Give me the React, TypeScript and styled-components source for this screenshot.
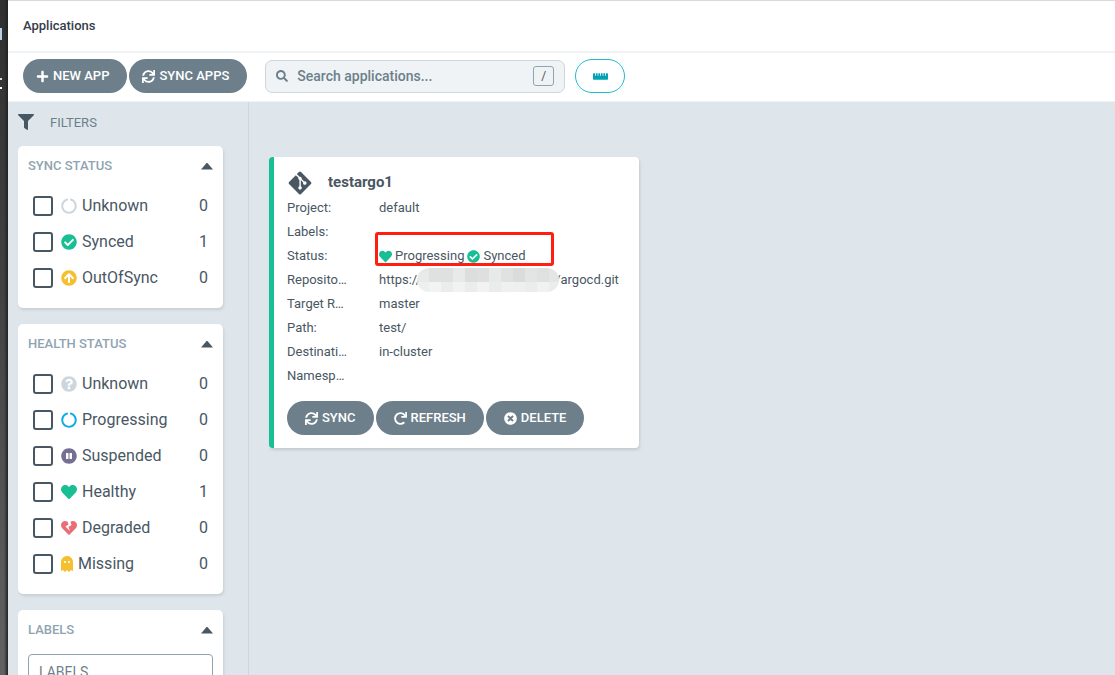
import React from 'react';
import styled, { createGlobalStyle } from 'styled-components';
import {
  FaArrowCircleUp, FaCheckCircle, FaCircleNotch, FaFilter, FaGhost, FaGitAlt, FaHeart, FaHeartBroken,
  FaPauseCircle, FaPlus, FaQuestionCircle, FaRedo, FaRulerHorizontal, FaSearch, FaSync, FaTimesCircle,
} from 'react-icons/fa';

const Global = createGlobalStyle`
  *, *::before, *::after { box-sizing: border-box; }
  html, body, #root { height: 100%; }
  body {
    margin: 0;
    font-family: Roboto, "Liberation Sans", sans-serif;
    font-size: 13px;
    color: #495763;
    background: #dee6eb;
    overflow: hidden;
  }
  button, input { font-family: inherit; }
`;

const Shell = styled.div`
  display: flex;
  height: 100vh;
  overflow: hidden;
`;

const WindowEdge = styled.aside`
  flex: 0 0 8px;
  display: flex;
  flex-direction: column;
  background: linear-gradient(to right, transparent 4px, #222 8px), linear-gradient(#303030, #404040 40%, #626262);
`;

const EdgeMark = styled.i<{ $top: number; $height: number; $width: number; $color: string }>`
  margin-top: ${p => p.$top}px;
  height: ${p => p.$height}px;
  width: ${p => p.$width}px;
  background: ${p => p.$color};
`;

const Page = styled.div`
  flex: 1;
  min-width: 0;
  display: flex;
  flex-direction: column;
  border-top: 1px solid #d8dadb;
`;

const TitleBar = styled.header`
  flex: none;
  height: 52px;
  padding: 0 15px;
  display: flex;
  align-items: center;
  background: #fff;
  border-bottom: 2px solid #eff3f5;
`;

const Title = styled.h1`
  margin: 0;
  font-size: 13px;
  line-height: 20px;
  font-weight: 500;
  color: #363c4a;
`;

const Toolbar = styled.div`
  flex: none;
  height: 49px;
  padding: 0 15px 2px;
  display: flex;
  align-items: center;
  background: #fff;
  border-bottom: 1px solid #eff3f5;
`;

const Buttons = styled.div`
  display: flex;
  gap: 2px;
`;

const Button = styled.button<{ $start: number }>`
  height: 34px;
  padding: 0 18px 0 ${p => p.$start}px;
  display: flex;
  align-items: center;
  gap: 4px;
  border: 0;
  border-radius: 17px;
  background: #6d7f8b;
  color: #fff;
  font-size: 13px;
  line-height: 20px;
  font-weight: 500;
  text-transform: uppercase;
  white-space: nowrap;
  svg { width: 13px; height: 13px; }
`;

const SearchBox = styled.label`
  width: 300px;
  height: 33px;
  margin: 0 10px 0 18px;
  padding: 0 10px;
  display: flex;
  align-items: center;
  gap: 9px;
  border: 1px solid #ccd6dd;
  border-radius: 7px;
  background: #eff3f5;
  color: #6d7f8b;
  svg { flex: none; width: 12px; height: 12px; }
`;

const SearchInput = styled.input`
  flex: 1;
  min-width: 0;
  padding: 0;
  border: 0;
  outline: 0;
  background: transparent;
  font-size: 14px;
  line-height: 20px;
  font-weight: 500;
  &::placeholder { color: #6d7f8b; opacity: 1; }
`;

const Key = styled.kbd`
  width: 21px;
  height: 20px;
  border: 1px solid #8fa4b1;
  border-radius: 3px;
  font-family: inherit;
  font-size: 12px;
  line-height: 18px;
  text-align: center;
  color: #495763;
`;

const RulerButton = styled.button`
  width: 50px;
  height: 34px;
  padding: 0;
  display: flex;
  align-items: center;
  justify-content: center;
  border: 1px solid #1fbdd0;
  border-radius: 17px;
  background: #fff;
  color: #00a2b3;
  svg { width: 15px; height: 15px; }
`;

const Body = styled.div`
  flex: 1;
  min-height: 0;
  display: flex;
`;

const Sidebar = styled.aside`
  flex: 0 0 241px;
  padding: 10px 25px 0 10px;
  border-right: 1px solid #ccd6dd;
  overflow: hidden;
`;

const FilterHeader = styled.h2`
  margin: 0 0 13px;
  display: flex;
  align-items: center;
  gap: 16px;
  font-size: 13px;
  line-height: 21px;
  font-weight: 400;
  color: #6d7f8b;
  svg { width: 16px; height: 18px; padding-bottom: 2px; color: #495763; }
`;

const Panel = styled.section`
  margin-bottom: 16px;
  padding: 10px 10px 12px;
  border-radius: 5px;
  background: #fff;
  box-shadow: 1px 2px 3px rgba(0, 0, 0, 0.1);
`;

const PanelHeader = styled.h3`
  margin: 0 0 12px;
  display: flex;
  align-items: center;
  justify-content: space-between;
  font-size: 13px;
  line-height: 20px;
  font-weight: 500;
  color: #8fa4b1;
`;

const Toggle = styled.button`
  width: 12px;
  height: 7px;
  padding: 0;
  border: 0;
  background: #495763;
  clip-path: polygon(50% 0, 100% 100%, 0 100%);
`;

const FilterRow = styled.label`
  height: 36px;
  padding: 0 5px;
  display: flex;
  align-items: center;
  font-size: 16px;
  line-height: 24px;
`;

const Checkbox = styled.input`
  appearance: none;
  flex: none;
  width: 20px;
  height: 20px;
  margin: 0 8px 0 0;
  border: 2px solid #495763;
  border-radius: 3px;
  background: #fff;
`;

const Icon = styled.span<{ $color: string; $narrow?: boolean }>`
  display: flex;
  margin-right: 5px;
  color: ${p => p.$color};
  svg { height: 16px; width: ${p => (p.$narrow ? 12 : 16)}px; }
`;

const Count = styled.span`
  margin-left: auto;
`;

const LabelInput = styled.input`
  width: 100%;
  height: 36px;
  margin-top: 2px;
  padding: 0 10px;
  border: 1px solid #8fa4b1;
  border-radius: 4px;
  font-size: 14px;
  &::placeholder { color: #6d7f8b; opacity: 1; }
`;

const Content = styled.main`
  flex: 1;
  min-width: 0;
  padding: 55px 20px;
`;

const Card = styled.article`
  width: 100%;
  max-width: 370px;
  padding: 13px;
  border-left: 5px solid #18be94;
  border-radius: 4px;
  background: #fff;
  box-shadow: 1px 2px 3px rgba(0, 0, 0, 0.12);
`;

const CardTitle = styled.h2`
  margin: 0;
  display: flex;
  align-items: flex-start;
  gap: 15px;
  font-size: 15px;
  line-height: 24px;
  font-weight: 700;
  svg { width: 26px; height: 26px; }
`;

const Details = styled.dl`
  margin: 0 0 13px;
  display: grid;
  grid-template-columns: 60px 1fr;
  column-gap: 32px;
  line-height: 24px;
`;

const Term = styled.dt`
  overflow: hidden;
  text-overflow: ellipsis;
  white-space: nowrap;
`;

const Value = styled.dd`
  margin: 0;
  height: 24px;
  display: flex;
  align-items: center;
  white-space: nowrap;
`;

const StatusValue = styled(Value)`
  position: relative;
  gap: 3px;
  svg { color: #18be94; }
`;

const Highlight = styled.span`
  position: absolute;
  left: -4px;
  top: -12px;
  width: 179px;
  height: 34px;
  border: 3px solid #ff1e12;
  border-radius: 3px;
`;

const Redaction = styled.svg`
  position: relative;
  flex: none;
  width: 142px;
  height: 24px;
  margin: 0 -4px;
`;

const SYNC = [
  { name: 'Unknown', count: 0, color: '#ccd6dd', icon: <FaCircleNotch /> },
  { name: 'Synced', count: 1, color: '#18be94', icon: <FaCheckCircle /> },
  { name: 'OutOfSync', count: 0, color: '#f4c030', icon: <FaArrowCircleUp /> },
];

const HEALTH = [
  { name: 'Unknown', count: 0, color: '#ccd6dd', icon: <FaQuestionCircle /> },
  { name: 'Progressing', count: 0, color: '#0dadea', icon: <FaCircleNotch /> },
  { name: 'Suspended', count: 0, color: '#766f94', icon: <FaPauseCircle /> },
  { name: 'Healthy', count: 1, color: '#18be94', icon: <FaHeart /> },
  { name: 'Degraded', count: 0, color: '#e96d76', icon: <FaHeartBroken /> },
  { name: 'Missing', count: 0, color: '#f4c030', icon: <FaGhost />, narrow: true },
];

const MOSAIC = [
  ['#e8e9e9', '#dfe0e0', '#dfe0e0', '#e8eaea', '#dcdddd', '#dfdfdf', '#e8eaea', '#dfe2e1', '#dadcdb', '#e4e4e4', '#dfe1e0', '#e4e5e5'],
  ['#eeefef', '#f3f3f3', '#ebecec', '#f1f2f2', '#ebecee', '#f2f2f2', '#eaebeb', '#f0f0f0', '#eeefef', '#ebeded', '#f0f1f1', '#ebecec'],
];

interface FilterItem {
  name: string;
  count: number;
  color: string;
  icon: React.ReactNode;
  narrow?: boolean;
}

function FilterPanel({ title, items }: { title: string; items: FilterItem[] }) {
  return (
    <Panel>
      <PanelHeader>{title}<Toggle aria-label={`Collapse ${title}`} /></PanelHeader>
      {items.map(item => (
        <FilterRow key={item.name}>
          <Checkbox type="checkbox" />
          <Icon $color={item.color} $narrow={item.narrow}>{item.icon}</Icon>
          {item.name}
          <Count>{item.count}</Count>
        </FilterRow>
      ))}
    </Panel>
  );
}

export default function App() {
  return (
    <>
      <Global />
      <Shell>
        <WindowEdge>
          <EdgeMark $top={28} $height={12} $width={2} $color="#b9cfe4" />
          <EdgeMark $top={38} $height={2} $width={2} $color="#e8d8c8" />
          <EdgeMark $top={7} $height={2} $width={2} $color="#ffffff" />
        </WindowEdge>
        <Page>
          <TitleBar><Title>Applications</Title></TitleBar>
          <Toolbar>
            <Buttons>
              <Button $start={13}><FaPlus />New App</Button>
              <Button $start={13}><FaSync />Sync Apps</Button>
            </Buttons>
            <SearchBox>
              <FaSearch />
              <SearchInput type="text" placeholder="Search applications..." aria-label="Search applications" />
              <Key>/</Key>
            </SearchBox>
            <RulerButton aria-label="Compact layout"><FaRulerHorizontal /></RulerButton>
          </Toolbar>
          <Body>
            <Sidebar>
              <FilterHeader><FaFilter />FILTERS</FilterHeader>
              <FilterPanel title="SYNC STATUS" items={SYNC} />
              <FilterPanel title="HEALTH STATUS" items={HEALTH} />
              <Panel>
                <PanelHeader>LABELS<Toggle aria-label="Collapse LABELS" /></PanelHeader>
                <LabelInput type="text" placeholder="LABELS" aria-label="Labels" />
              </Panel>
            </Sidebar>
            <Content>
              <Card>
                <CardTitle><FaGitAlt />testargo1</CardTitle>
                <Details>
                  <Term>Project:</Term><Value>default</Value>
                  <Term>Labels:</Term><Value />
                  <Term>Status:</Term>
                  <StatusValue>
                    <FaHeart />Progressing <FaCheckCircle />Synced
                    <Highlight />
                  </StatusValue>
                  <Term>Repository:</Term>
                  <Value>
                    https://
                    <Redaction viewBox="0 0 142 24" aria-hidden="true">
                      <defs><clipPath id="pill"><rect width="142" height="24" rx="12" /></clipPath></defs>
                      <g clipPath="url(#pill)">
                        {MOSAIC.map((row, y) => row.map((fill, x) => (
                          <rect key={`${x}-${y}`} x={x * 12} y={y * 14} width="12" height="14" fill={fill} />
                        )))}
                      </g>
                    </Redaction>
                    /argocd.git
                  </Value>
                  <Term>Target Revision:</Term><Value>master</Value>
                  <Term>Path:</Term><Value>test/</Value>
                  <Term>Destination:</Term><Value>in-cluster</Value>
                  <Term>Namespace:</Term><Value />
                </Details>
                <Buttons>
                  <Button $start={18}><FaSync />Sync</Button>
                  <Button $start={18}><FaRedo />Refresh</Button>
                  <Button $start={18}><FaTimesCircle />Delete</Button>
                </Buttons>
              </Card>
            </Content>
          </Body>
        </Page>
      </Shell>
    </>
  );
}
